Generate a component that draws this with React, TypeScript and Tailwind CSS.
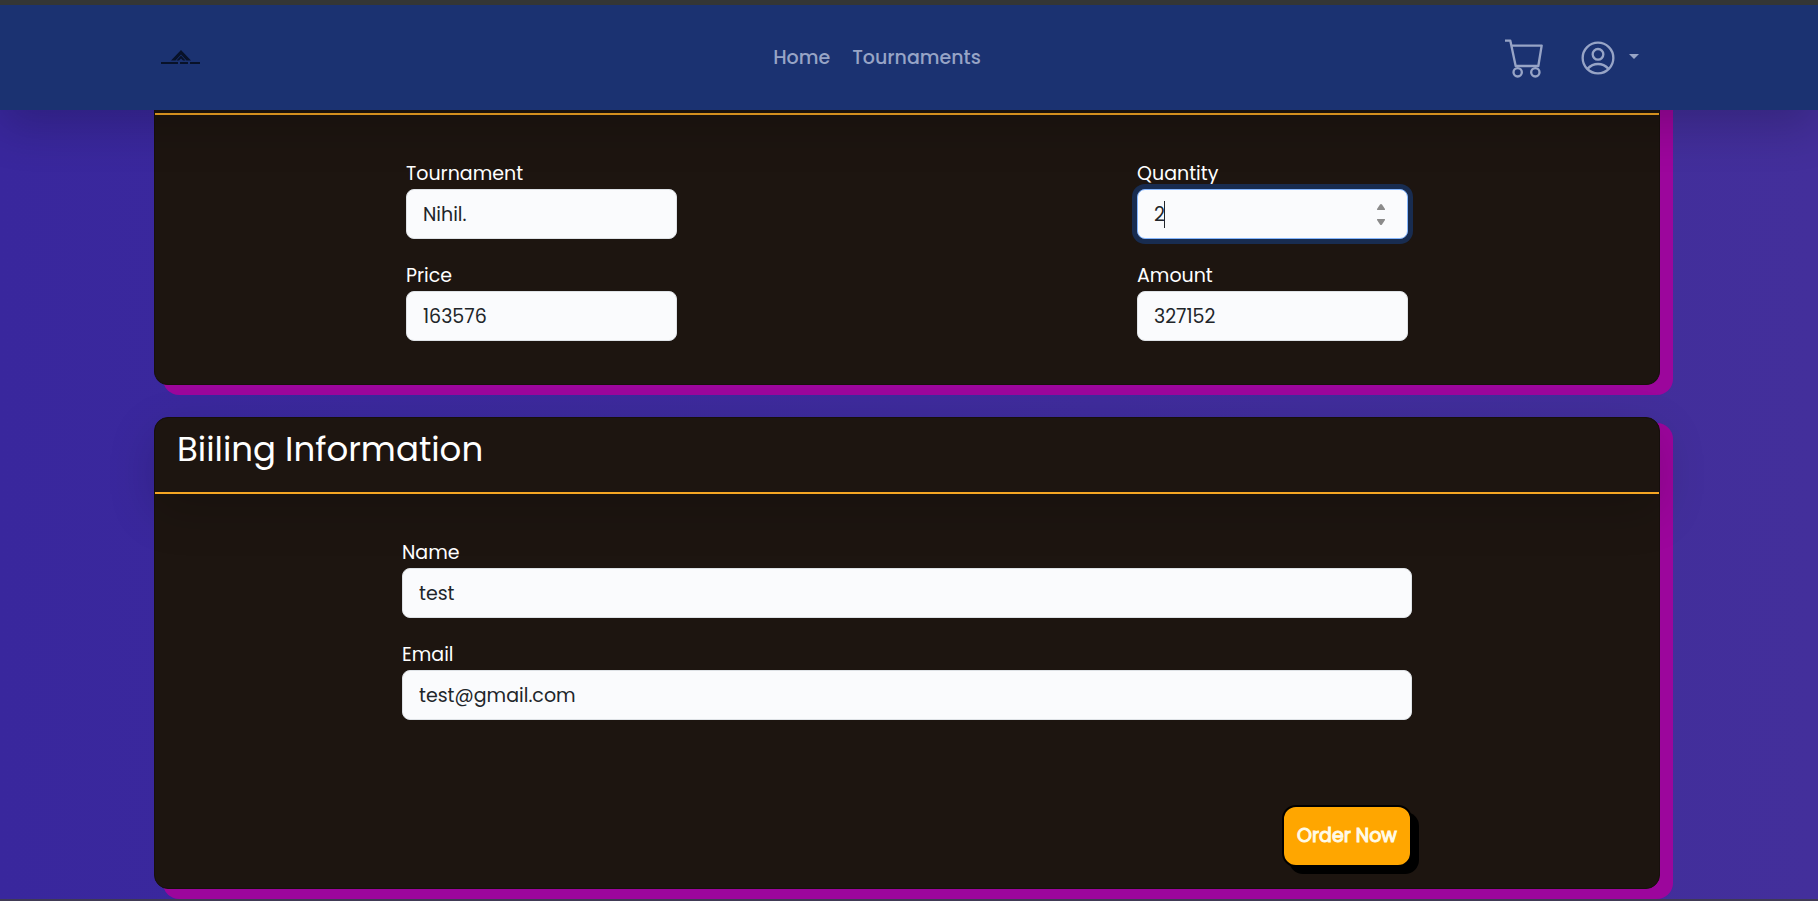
import { useState } from 'react';

interface FieldProps {
  id: string;
  label: string;
  value: string;
  type?: string;
  onChange?: (value: string) => void;
}

const LABEL_CLASS = 'block pt-0.5 text-[19px] leading-[30px] text-white';

const INPUT_CLASS =
  'block w-full h-[50px] rounded-lg border border-[#dee2e6] bg-[#fafbfd] px-4 text-[19px] text-[#212529] outline-none';

function Field({ id, label, value, type = 'text', onChange }: FieldProps) {
  return (
    <div>
      <label htmlFor={id} className={LABEL_CLASS}>
        {label}
      </label>
      <input
        id={id}
        type={type}
        value={value}
        readOnly={!onChange}
        onChange={(e) => onChange?.(e.target.value)}
        className={INPUT_CLASS}
      />
    </div>
  );
}

interface QuantityFieldProps {
  value: number;
  onChange: (value: number) => void;
}

function QuantityField({ value, onChange }: QuantityFieldProps) {
  return (
    <div>
      <label htmlFor="quantity" className={LABEL_CLASS}>
        Quantity
      </label>
      <div className="relative">
        <input
          id="quantity"
          type="number"
          min={1}
          value={value}
          onChange={(e) => onChange(Number(e.target.value))}
          className="block w-full h-[50px] rounded-lg border border-[#86b7fe] bg-[#fafbfd] px-4 text-[19px] text-[#212529] outline-none ring-5 ring-[#182c50] [appearance:textfield] [&::-webkit-inner-spin-button]:appearance-none"
        />
        <span className="pointer-events-none absolute left-[27px] top-3 h-[27px] w-px bg-[#212529]" />
        <div className="absolute right-[22px] top-3 flex flex-col gap-[7px]">
          <button type="button" aria-label="Increase" onClick={() => onChange(value + 1)}>
            <svg width="10" height="10" viewBox="0 0 10 10" fill="#8b8b8b">
              <path d="M4 3.5Q5 2.3 6 3.5L9 8Q9.3 9 8.5 9H1.5Q.7 9 1 8Z" />
            </svg>
          </button>
          <button type="button" aria-label="Decrease" onClick={() => onChange(Math.max(1, value - 1))}>
            <svg width="10" height="10" viewBox="0 0 10 10" fill="#8b8b8b">
              <path d="M4 6.5Q5 7.7 6 6.5L9 2Q9.3 1 8.5 1H1.5Q.7 1 1 2Z" />
            </svg>
          </button>
        </div>
      </div>
    </div>
  );
}

function Logo() {
  return (
    <svg width="40" height="16" viewBox="0 0 40 16" aria-label="Logo">
      <path d="M20 0 30 10.5H25.5L20 4.5 14.5 10.5H10Z" fill="#081229" />
      <path d="M20 5.5 24.5 10.5H22L20 8.5 18 10.5H15.5Z" fill="#081229" />
      <path d="M0 13H17M19 13H27M29 13H39" stroke="#081229" strokeWidth="2" />
    </svg>
  );
}

function CartIcon() {
  return (
    <svg width="38" height="39" viewBox="0 0 114 117" fill="none" stroke="currentColor" strokeWidth="7">
      <path d="M0 5H16L32 81H100L110 20H19" strokeLinejoin="round" />
      <circle cx="38" cy="100" r="12.5" />
      <circle cx="91" cy="100" r="12.5" />
    </svg>
  );
}

function ProfileIcon() {
  return (
    <svg width="34" height="34" viewBox="0 0 102 102" fill="none" stroke="currentColor" strokeWidth="7">
      <circle cx="51" cy="51" r="46" />
      <circle cx="51" cy="40" r="16" />
      <path d="M20 83Q33 69 51 69T82 83" />
    </svg>
  );
}

function Navbar() {
  return (
    <nav className="relative z-10 flex h-[105px] items-center justify-between bg-[#1b3271] pl-[161px] pr-[179px] pt-px text-[#97a4c6] shadow-[0_16px_48px_rgba(0,0,0,0.2)]">
      <a href="#" className="w-[88px]">
        <Logo />
      </a>
      <div className="flex gap-[22px] text-[19px] font-medium">
        <a href="#">Home</a>
        <a href="#">Tournaments</a>
      </div>
      <div className="flex items-center gap-[38px]">
        <a href="#" aria-label="Cart">
          <CartIcon />
        </a>
        <button type="button" aria-label="Account" className="flex items-center gap-[14px]">
          <ProfileIcon />
          <svg width="10" height="9" viewBox="0 0 10 9" fill="currentColor">
            <path d="M0 0H10L5 5Z" />
          </svg>
        </button>
      </div>
    </nav>
  );
}

export default function App() {
  const [quantity, setQuantity] = useState(2);
  const price = 163576;

  return (
    <div className="min-h-screen overflow-hidden border-t-5 border-b-2 border-t-[#343635] border-b-[#403a55] bg-linear-to-r from-[#39279d] to-[#432f9b] font-[Poppins,Inter,sans-serif]">
      <Navbar />

      <main className="flex flex-col gap-8 pb-[10px] pl-[154px] pr-[158px]">
        {/* Order */}
        <section className="rounded-b-[14px] border border-t-0 border-[#17100c] bg-[#1d1510] shadow-[11px_8px_0_2px_#9c069c,13px_-8px_0_#9c069c]">
          <div className="h-[5px] border-b-2 border-[#f5a623]" />
          <div className="flex justify-between px-[251px] pb-[43px] pt-[42px]">
            <div className="flex w-[271px] flex-col gap-5">
              <Field id="tournament" label="Tournament" value="Nihil." />
              <Field id="price" label="Price" value={String(price)} />
            </div>
            <div className="flex w-[271px] flex-col gap-5">
              <QuantityField value={quantity} onChange={setQuantity} />
              <Field id="amount" label="Amount" value={String(price * quantity)} />
            </div>
          </div>
        </section>

        {/* Billing */}
        <section className="rounded-[14px] border border-[#17100c] bg-[#1d1510] shadow-[11px_8px_0_2px_#9c069c]">
          <div className="rounded-t-[14px] border-b-2 border-[#f5a623] px-[22px] pb-5 pt-[9px] shadow-[0_16px_48px_rgba(0,0,0,0.175)]">
            <h2 className="text-[34px] leading-[45px] text-white">Biiling Information</h2>
          </div>
          <form className="px-[247px] pb-[21px] pt-[42px]" onSubmit={(e) => e.preventDefault()}>
            <div className="flex flex-col gap-5">
              <Field id="name" label="Name" value="test" />
              <Field id="email" label="Email" type="email" value="test@gmail.com" />
            </div>
            <div className="mt-[85px] flex justify-end">
              <button
                type="submit"
                className="h-[62px] w-[130px] rounded-[14px] border-2 border-black bg-[#ffa600] text-[19px] text-[#fffbe8] shadow-[7px_7px_0_#000] [-webkit-text-stroke:1px]"
              >
                Order Now
              </button>
            </div>
          </form>
        </section>
      </main>
    </div>
  );
}
